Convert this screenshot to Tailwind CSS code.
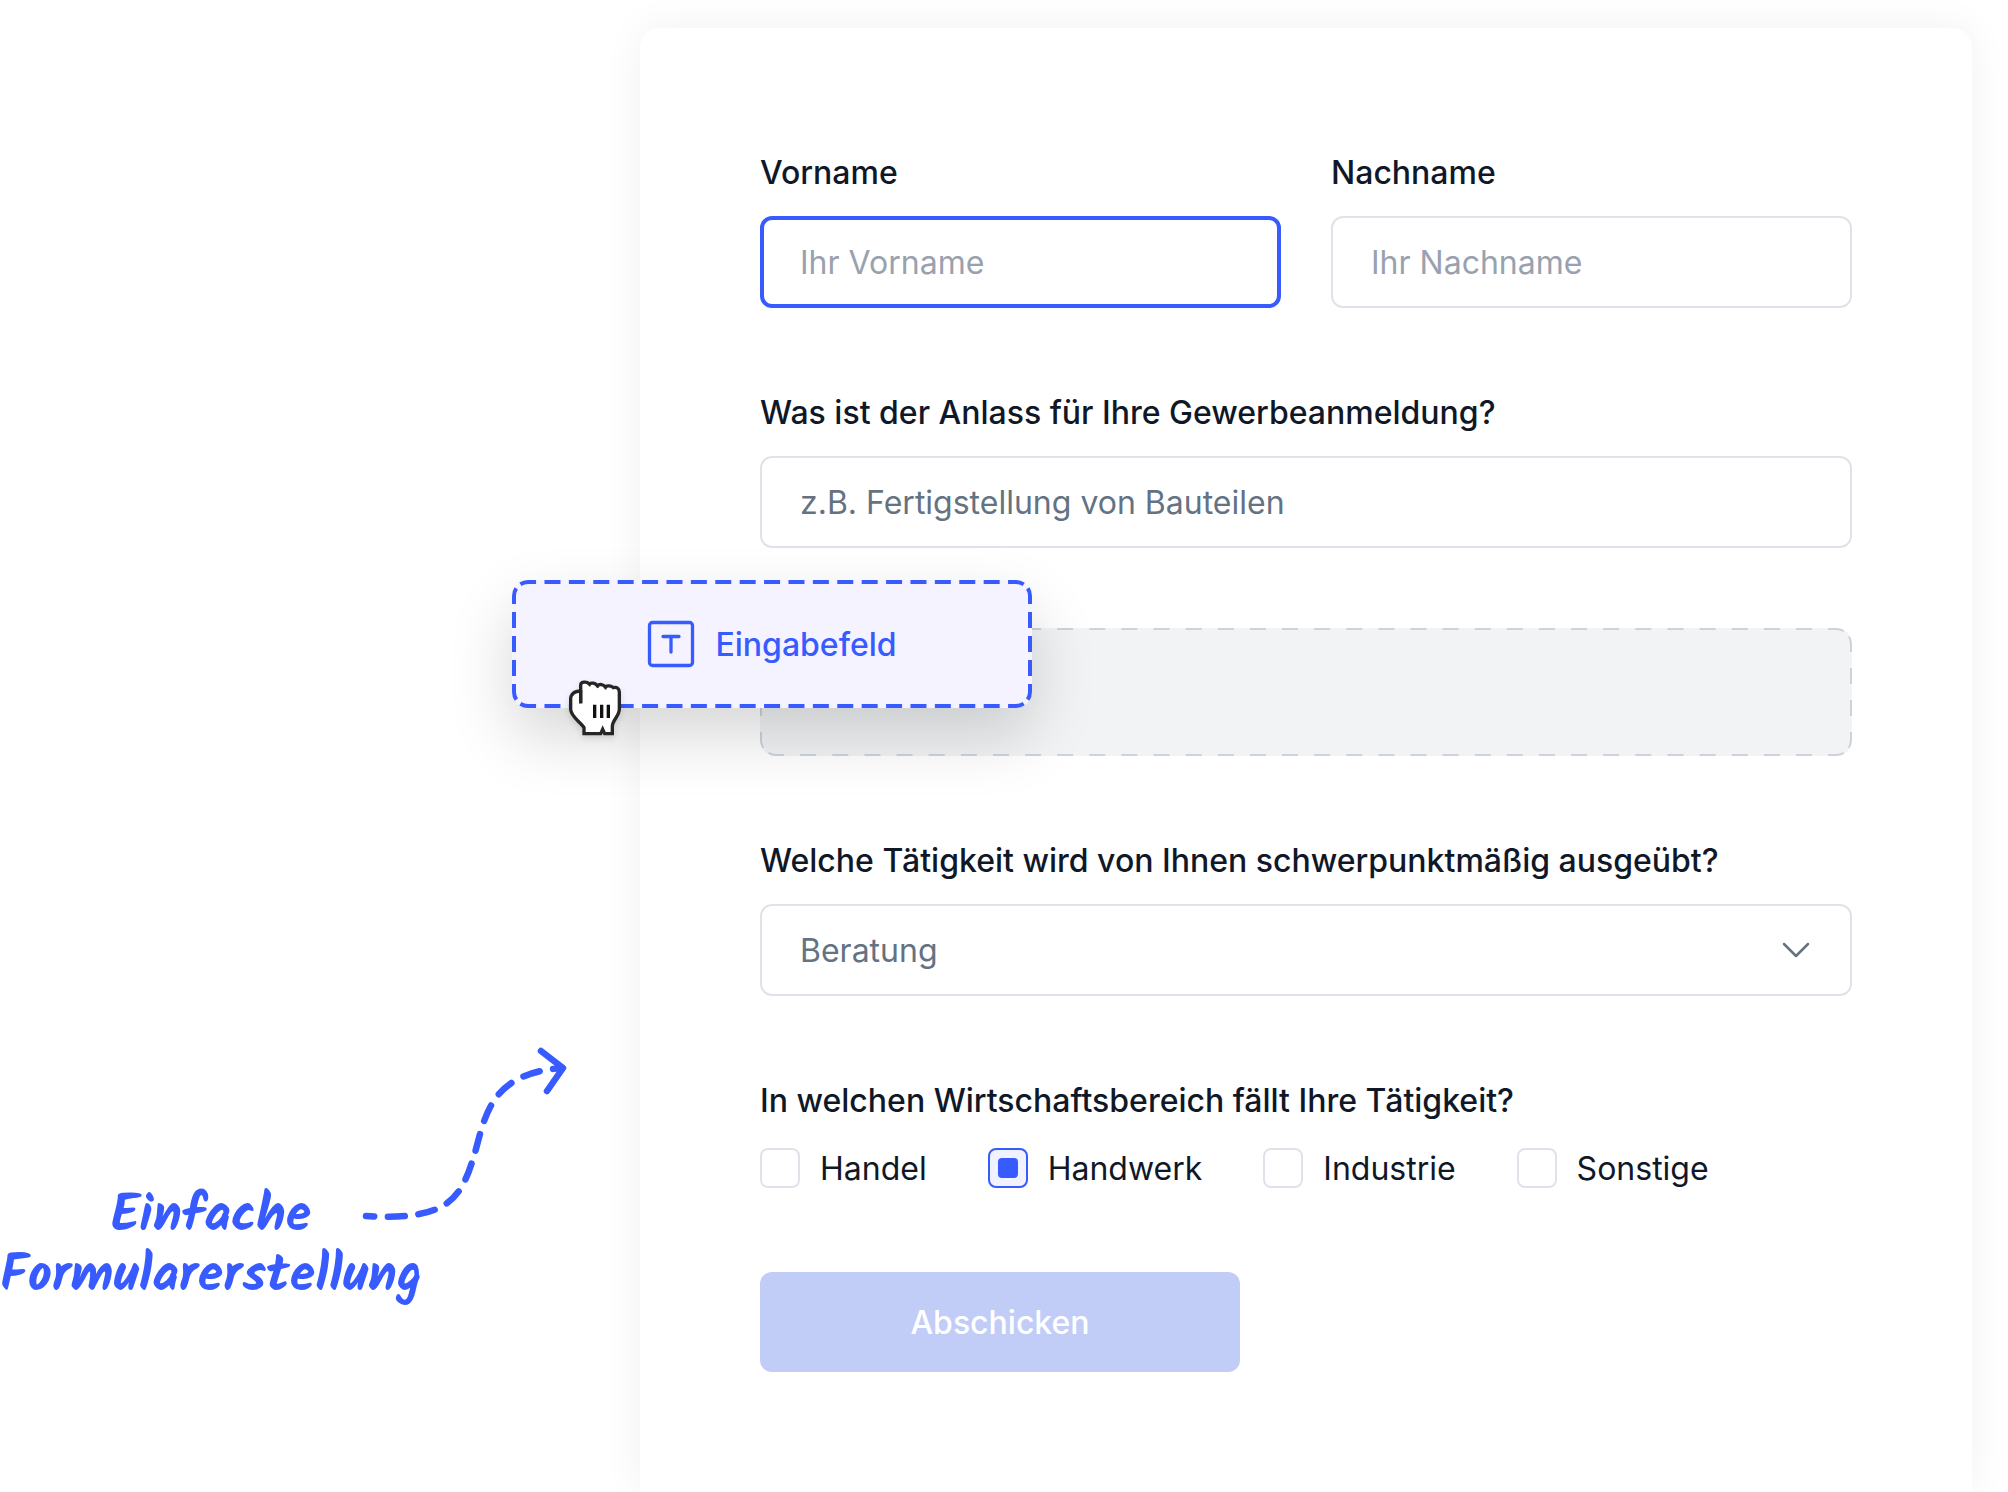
<!DOCTYPE html>
<html lang="de">
<head>
  <meta charset="UTF-8">
  <meta name="viewport" content="width=device-width, initial-scale=1">
  <title>Einfache Formularerstellung</title>
  <script src="https://cdn.jsdelivr.net/npm/@tailwindcss/browser@4"></script>
</head>
<body class="bg-white text-gray-900 text-[32px] leading-[50px] font-['Inter',sans-serif]">

<div class="flex min-h-screen overflow-hidden">

  <!-- caption + arrow -->
  <aside class="w-[640px] shrink-0 pt-[1044px] flex items-start text-[#375bff]">
    <p class="w-[422px] shrink-0 pt-[144px] text-center text-[52px] leading-[60px] font-bold font-['Kalam','Liberation_Sans_Narrow',cursive]">Einfache<br>Formularerstellung</p>
    <svg class="w-[218px] h-[190px] shrink-0" viewBox="422 1044 218 190" overflow="visible" fill="none" stroke="currentColor" stroke-width="6.500" stroke-linecap="round" stroke-linejoin="round" aria-hidden="true">
      <path stroke-dasharray="17 13.7" stroke-dashoffset="9" d="M366 1216C452 1221 462 1197 476 1149C486 1111 494 1073 562 1068"/>
      <path d="M541 1051L563 1068L547 1091"/>
    </svg>
  </aside>

  <main class="flex-1 min-w-0 mt-7 mr-9 p-[120px] rounded-t-[20px] bg-white shadow-[0_0_40px_rgba(0,0,0,0.06)]">
    <form class="flex flex-col gap-20">

      <div class="grid grid-cols-2 gap-[50px]">
        <div class="flex flex-col gap-[18px]">
          <label for="vorname" class="font-medium">Vorname</label>
          <input id="vorname" type="text" placeholder="Ihr Vorname" class="w-full h-[92px] px-9 rounded-xl border-4 border-[#375bff] outline-none placeholder:text-gray-400">
        </div>
        <div class="flex flex-col gap-[18px]">
          <label for="nachname" class="font-medium">Nachname</label>
          <input id="nachname" type="text" placeholder="Ihr Nachname" class="w-full h-[92px] px-[38px] rounded-xl border-2 border-[#dfe3e9] outline-none placeholder:text-gray-400">
        </div>
      </div>

      <div class="flex flex-col gap-[18px]">
        <label for="anlass" class="font-medium">Was ist der Anlass für Ihre Gewerbeanmeldung?</label>
        <input id="anlass" type="text" placeholder="z.B. Fertigstellung von Bauteilen" class="w-full h-[92px] px-[38px] rounded-xl border-2 border-[#dfe3e9] outline-none placeholder:text-[#647282]">
      </div>

      <!-- drop zone -->
      <div class="relative h-32 rounded-2xl bg-[#f2f3f5]">
        <svg class="w-full h-full" viewBox="0 0 1092 128" preserveAspectRatio="none" fill="none" stroke="#ced3da" stroke-width="2" aria-hidden="true">
          <g stroke-dasharray="16 16.12" stroke-dashoffset="-3.8">
            <path d="M5.4 5.4A15 15 0 0 1 16 1H1076A15 15 0 0 1 1086.6 5.4"/>
            <path d="M5.4 122.6A15 15 0 0 0 16 127H1076A15 15 0 0 0 1086.6 122.6"/>
          </g>
          <g stroke-dasharray="16 16" stroke-dashoffset="-3.8">
            <path d="M5.4 5.4A15 15 0 0 0 1 16V112A15 15 0 0 0 5.4 122.6"/>
            <path d="M1086.6 5.4A15 15 0 0 1 1091 16V112A15 15 0 0 1 1086.6 122.6"/>
          </g>
        </svg>

        <!-- dragged field -->
        <div class="absolute -left-[248px] -top-12 w-[520px] h-32 rounded-2xl bg-[#f5f3ff] shadow-[0_28px_64px_rgba(0,0,0,0.16)] flex items-center justify-center gap-5 font-medium text-[#375bff]">
          <svg class="absolute inset-0 w-full h-full" viewBox="0 0 520 128" fill="none" stroke="currentColor" stroke-width="4" aria-hidden="true">
            <g stroke-dasharray="16 8.4" stroke-dashoffset="-3">
              <path d="M6.1 6.1A14 14 0 0 1 16 2H504A14 14 0 0 1 513.9 6.1"/>
              <path d="M6.1 121.9A14 14 0 0 0 16 126H504A14 14 0 0 0 513.9 121.9"/>
            </g>
            <g stroke-dasharray="16 8" stroke-dashoffset="-3">
              <path d="M6.1 6.1A14 14 0 0 0 2 16V112A14 14 0 0 0 6.1 121.9"/>
              <path d="M513.9 6.1A14 14 0 0 1 518 16V112A14 14 0 0 1 513.9 121.9"/>
            </g>
          </svg>
          <svg class="size-12" viewBox="0 0 48 48" fill="none" stroke="currentColor" stroke-width="3.300" stroke-linecap="round" stroke-linejoin="round" aria-hidden="true">
            <rect x="2.500" y="2.500" width="43" height="43" rx="3"/>
            <path d="M16 16.500H32M24 16.500V32"/>
          </svg>
          <span class="pt-0.5">Eingabefeld</span>

          <!-- grabbing hand -->
          <svg class="absolute left-[38px] top-20 w-[100px] h-[90px] drop-shadow-md" viewBox="0 0 300 270" fill="none" stroke="#262626" stroke-width="10" aria-hidden="true">
            <path fill="#fff" d="M92 130V76C92 66 108 62 118 72C124 67 136 69 142 77C149 71 160 73 166 81C172 76 184 77 190 83C201 80 208 86 208 96V148C208 168 188 180 187 198V221H164L158 208L152 221H102V203C92 186 62 170 62 148V118C62 103 72 93 92 93"/>
            <path d="M92 90V130"/>
            <path stroke-width="5" d="M118 70L120 79M142 75L144 84M166 79L168 88"/>
            <path stroke="#111" d="M134 134V174M155 134V174M175 134V174"/>
          </svg>
        </div>
      </div>

      <div class="flex flex-col gap-[18px]">
        <label for="taetigkeit" class="font-medium">Welche Tätigkeit wird von Ihnen schwerpunktmäßig ausgeübt?</label>
        <div class="relative">
          <select id="taetigkeit" class="block w-full h-[92px] px-[38px] pt-0.5 appearance-none rounded-xl border-2 border-[#dfe3e9] bg-white text-[#647282]">
            <option>Beratung</option>
          </select>
          <svg class="absolute right-10 top-8 w-8 h-7 pointer-events-none text-[#647282]" viewBox="0 0 32 28" fill="none" stroke="currentColor" stroke-width="2.500" stroke-linecap="round" stroke-linejoin="round" aria-hidden="true">
            <path d="M4 8L16 20L28 8"/>
          </svg>
        </div>
      </div>

      <fieldset>
        <legend class="font-medium mb-[18px]">In welchen Wirtschaftsbereich fällt Ihre Tätigkeit?</legend>
        <div class="flex gap-[61px] h-12">
          <label class="flex items-center gap-5">
            <input type="checkbox" class="size-10 appearance-none rounded-lg border-2 border-[#dfe3e9] grid place-items-center checked:border-[#375bff] checked:bg-[#f1f2ff] checked:before:content-[''] checked:before:size-5 checked:before:rounded-sm checked:before:bg-[#375bff]">
            <span class="pt-0.5">Handel</span>
          </label>
          <label class="flex items-center gap-5">
            <input type="checkbox" checked class="size-10 appearance-none rounded-lg border-2 border-[#dfe3e9] grid place-items-center checked:border-[#375bff] checked:bg-[#f1f2ff] checked:before:content-[''] checked:before:size-5 checked:before:rounded-sm checked:before:bg-[#375bff]">
            <span class="pt-0.5">Handwerk</span>
          </label>
          <label class="flex items-center gap-5">
            <input type="checkbox" class="size-10 appearance-none rounded-lg border-2 border-[#dfe3e9] grid place-items-center checked:border-[#375bff] checked:bg-[#f1f2ff] checked:before:content-[''] checked:before:size-5 checked:before:rounded-sm checked:before:bg-[#375bff]">
            <span class="pt-0.5">Industrie</span>
          </label>
          <label class="flex items-center gap-5">
            <input type="checkbox" class="size-10 appearance-none rounded-lg border-2 border-[#dfe3e9] grid place-items-center checked:border-[#375bff] checked:bg-[#f1f2ff] checked:before:content-[''] checked:before:size-5 checked:before:rounded-sm checked:before:bg-[#375bff]">
            <span class="pt-0.5">Sonstige</span>
          </label>
        </div>
      </fieldset>

      <button type="submit" class="w-[480px] h-[100px] pt-0.5 rounded-xl bg-[#c2cdf7] font-medium text-white">Abschicken</button>
    </form>
  </main>
</div>

</body>
</html>
